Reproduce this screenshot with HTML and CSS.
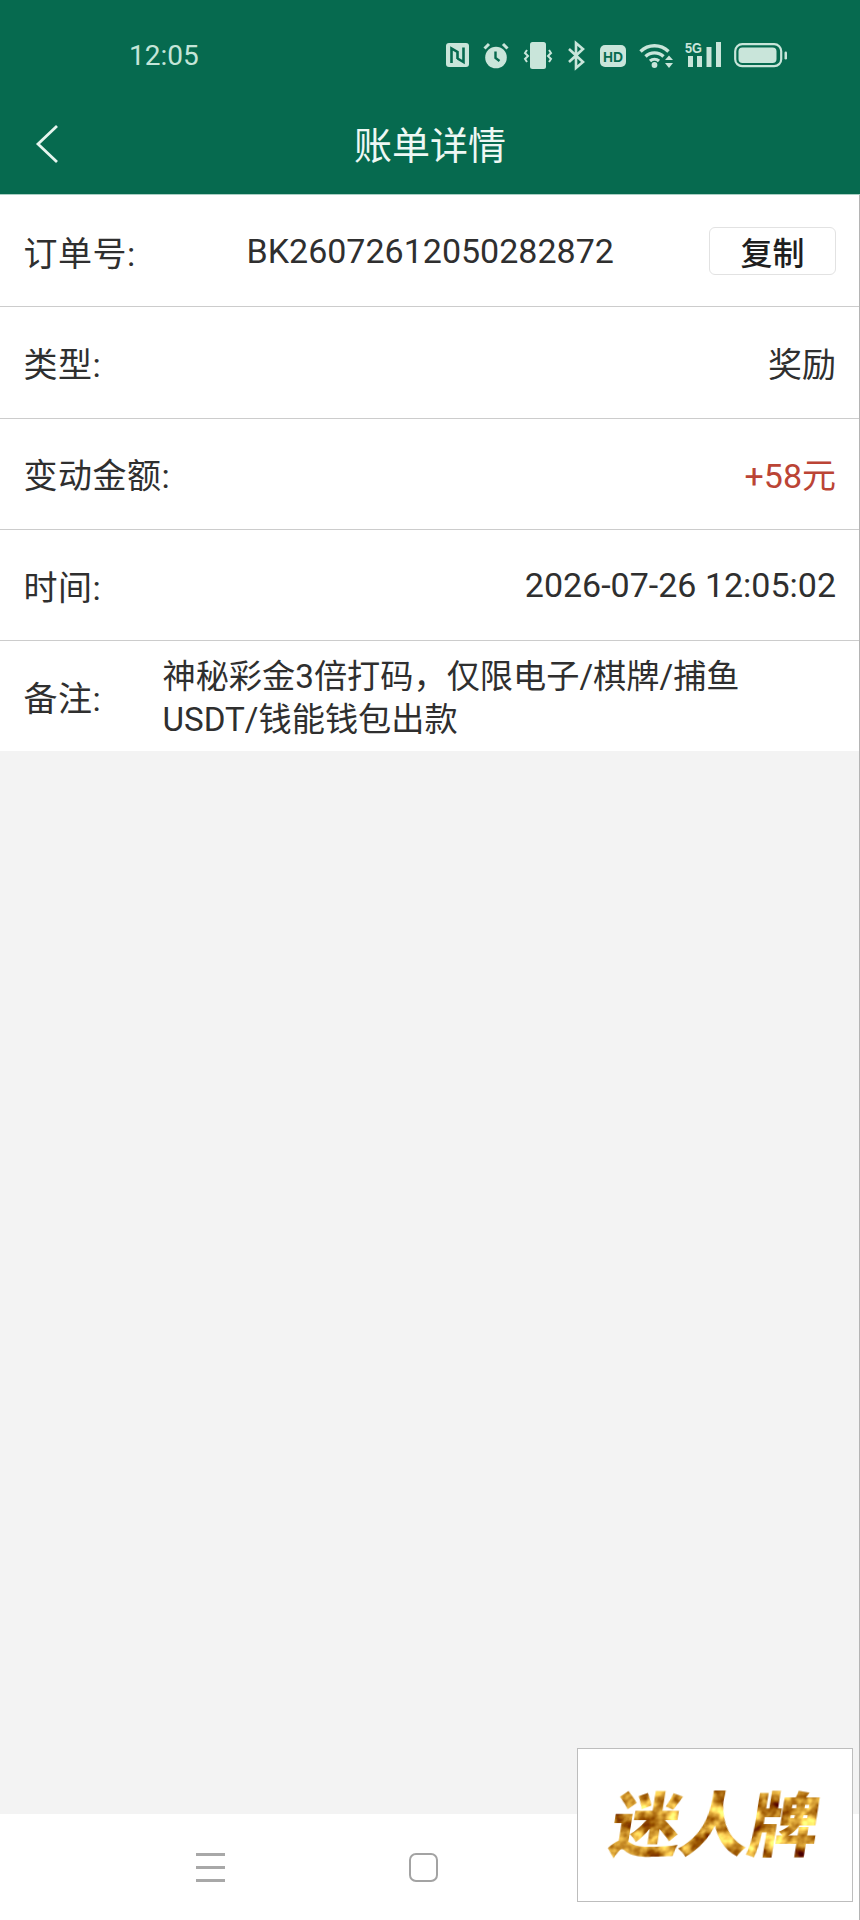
FILE: index.html
```html
<!DOCTYPE html>
<html lang="zh-CN">
<head>
<meta charset="utf-8">
<title>账单详情</title>
<link rel="stylesheet" href="styles.css">
</head>
<body>
<div class="page">
  <header class="header">
    <div class="status">
      <span class="time">12:05</span>
      <svg class="icons" width="342" height="27" viewBox="0 0 342 27">
        <g transform="translate(0 1)"><rect width="23" height="24" rx="3" fill="#c9e5da"/><path d="M5.500 20V5.500l6 3.500v7M17.500 4.500V19l-6-3.500" fill="none" stroke="#066a4f" stroke-width="2.600"/></g>
        <g transform="translate(37 0)"><circle cx="13" cy="15.500" r="10.800" fill="#c9e5da"/><path d="M12.500 9.500V16l4 3" fill="none" stroke="#066a4f" stroke-width="2.400"/><path d="M1.500 6.500L6 2M24.500 6.500L20 2" stroke="#c9e5da" stroke-width="3"/></g>
        <g transform="translate(78 0)"><rect x="6" y="0" width="16" height="27" rx="2.500" fill="#c9e5da"/><path d="M3 8L1 11l3 3-3 3 2 3M25 8l2 3-3 3 3 3-2 3" fill="none" stroke="#c9e5da" stroke-width="2"/></g>
        <g transform="translate(122 0)"><path d="M1 7l14 13-7 6V1l7 6L1 20" fill="none" stroke="#c9e5da" stroke-width="2.600"/></g>
        <g transform="translate(154 3)"><rect width="26" height="22" rx="5" fill="#c9e5da"/><text x="13" y="17" text-anchor="middle" class="hd" textLength="20" lengthAdjust="spacingAndGlyphs">HD</text></g>
        <g transform="translate(193 0)"><path d="M1.500 9.500a20 20 0 0 1 28 0M6.500 14.500a13 13 0 0 1 18 0M11 19a7 7 0 0 1 9 0" fill="none" stroke="#c9e5da" stroke-width="3.400"/><circle cx="15.500" cy="23" r="2.900" fill="#c9e5da"/><path d="M26 18l4-4.500 4 4.500zM26 21l4 5 4-5z" fill="#c9e5da"/></g>
        <g transform="translate(239 0)"><text x="0" y="11" class="fiveg" textLength="17" lengthAdjust="spacingAndGlyphs">5G</text><path d="M3 14h5v11H3zM12 14h5v11h-5zM21.500 5h5v20h-5zM31 0h5v25h-5z" fill="#c9e5da"/></g>
        <g transform="translate(288 1)"><rect x="1.200" y="1.200" width="46" height="22" rx="7" fill="none" stroke="#c9e5da" stroke-width="2.200"/><rect x="4.500" y="4.500" width="38" height="15.500" rx="4" fill="#c9e5da"/><rect x="50.500" y="8.500" width="2.500" height="8" rx="1.200" fill="#c9e5da"/></g>
      </svg>
    </div>
    <div class="nav">
      <svg class="back" width="24" height="40" viewBox="0 0 24 40"><path d="M22 2L3 20l19 18" fill="none" stroke="#e6f5ef" stroke-width="2.800"/></svg>
      <h1 class="title">账单详情</h1>
    </div>
  </header>
  <main class="list">
    <div class="row"><span class="label">订单号:</span><span class="order">BK26072612050282872</span><button class="copy">复制</button></div>
    <div class="row"><span class="label">类型:</span><span class="value">奖励</span></div>
    <div class="row"><span class="label">变动金额:</span><span class="value amount">+58元</span></div>
    <div class="row"><span class="label">时间:</span><span class="value">2026-07-26 12:05:02</span></div>
    <div class="row row-note"><span class="label">备注:</span><span class="note">神秘彩金3倍打码，仅限电子/棋牌/捕鱼<br>USDT/钱能钱包出款</span></div>
  </main>
  <div class="fill"></div>
  <footer class="softkeys">
    <div class="menu-key"><span></span><span></span><span></span></div>
    <div class="home-key"></div>
  </footer>
  <div class="logo">
    <svg width="274" height="152" viewBox="0 0 274 152">
      <defs>
        <filter id="gold" x="-5%" y="-5%" width="110%" height="110%" color-interpolation-filters="sRGB">
          <feTurbulence type="fractalNoise" baseFrequency="0.06" numOctaves="3" seed="7"/>
          <feColorMatrix type="matrix" values="1.400 0 0 0 0.090  1.700 0 0 0 -0.290  1.200 0 0 0 -0.440  0 0 0 0 1"/>
          <feComposite in2="SourceAlpha" operator="in"/>
        </filter>
      </defs>
      <text class="logo-text" x="137" y="102" text-anchor="middle" transform="skewX(-9) translate(12 0)" filter="url(#gold)">迷人牌</text>
    </svg>
  </div>
</div>
</body>
</html>
```
FILE: styles.css
```css
* { box-sizing: border-box; }
html, body { margin: 0; padding: 0; }
body { width: 860px; height: 1920px; overflow: hidden; background: #f3f3f3; font-family: Roboto, "Noto Sans CJK SC", sans-serif; color: #2f2f2f; }
.page { position: relative; width: 860px; height: 1920px; display: flex; flex-direction: column; border-right: 1px solid #b4b4b4; }
.header { height: 195px; margin-right: -1px; background: #066a4f; border-bottom: 1.500px solid #a9cfc3; flex: none; }
.status { height: 100px; display: flex; align-items: center; justify-content: space-between; padding: 10px 72px 0 129px; }
.time { font-size: 28px; color: #c4e5d8; }
.icons { display: block; flex: none; overflow: visible; }
.hd { font: 700 15px "Liberation Sans", sans-serif; fill: #066a4f; }
.fiveg { font: 700 14px "Liberation Sans", sans-serif; fill: #c9e5da; }
.nav { position: relative; height: 94px; display: flex; align-items: center; justify-content: center; }
.back { position: absolute; left: 35px; top: 24px; }
.title { margin: 0; font-size: 38px; font-weight: 400; color: #eef8f4; transform: translateY(-5px); }
.list { background: #fff; flex: none; padding-top: 1px; }
.row { height: 111.300px; display: flex; align-items: center; padding: 0 23px 0 24px; border-bottom: 1.500px solid #cccccc; font-size: 34px; }
.row-note { height: 110px; border-bottom: 0; }
.label { flex: none; width: 139px; white-space: nowrap; letter-spacing: 0.500px; margin-left: -0.500px; }
.order { flex: 1; padding-left: 84px; white-space: nowrap; }
.value { flex: 1; text-align: right; white-space: nowrap; }
.amount { color: #bb4435; }
.copy { width: 127px; height: 48px; padding: 0; background: #fff; border: 1px solid #e2e2e2; border-radius: 6px; font: inherit; font-size: 32px; font-weight: 500; color: #1f1f1f; }
.note { flex: 1; font-size: 33.200px; line-height: 43px; white-space: nowrap; transform: translateY(2px); }
.fill { flex: 1; }
.softkeys { height: 106px; background: #fff; flex: none; display: flex; padding: 39px 0 0 196px; gap: 184px; }
.menu-key { width: 29px; height: 29px; display: flex; flex-direction: column; justify-content: space-between; }
.menu-key span { display: block; height: 3px; background: #a8a8a8; }
.home-key { width: 29px; height: 29px; border: 2.500px solid #a3a3a3; border-radius: 7px; }
.logo { position: absolute; left: 577px; top: 1748px; width: 276px; height: 154px; background: #fff; border: 1px solid #bdbdbd; }
.logo svg { display: block; }
.logo-text { font-family: "Noto Sans CJK SC", sans-serif; font-weight: 900; font-size: 70px; letter-spacing: -1px; }
```
